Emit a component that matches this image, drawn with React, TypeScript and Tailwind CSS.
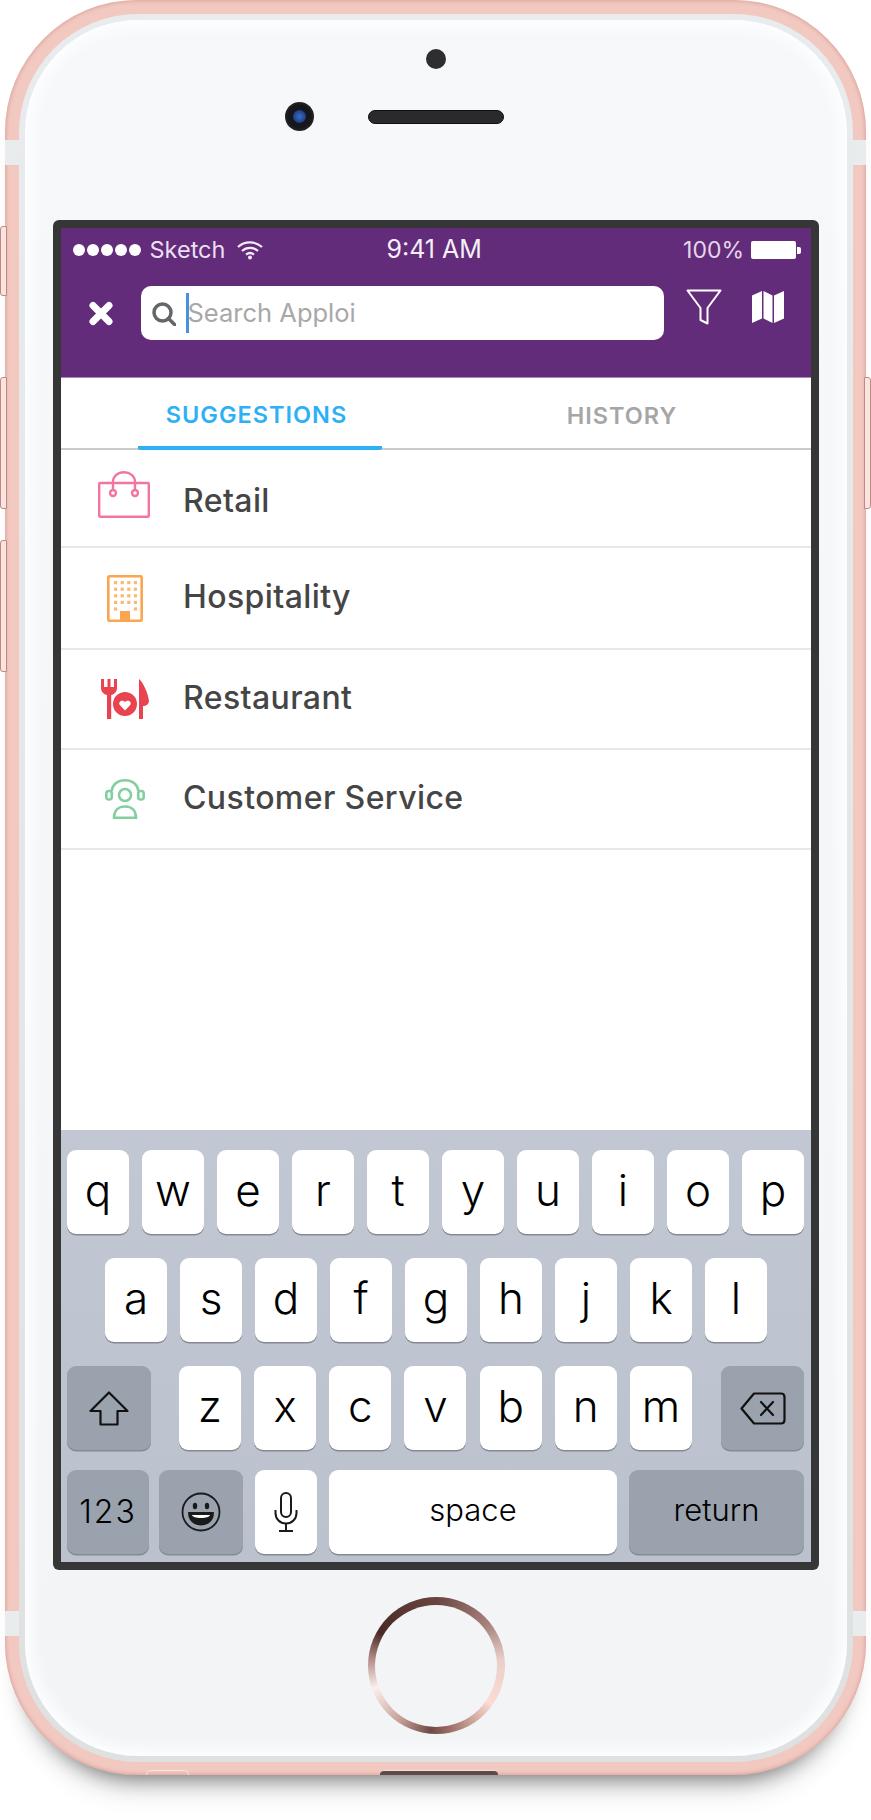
import { ReactNode } from 'react';

const rows = [
  { name: 'Retail', height: 'h-[98px]', text: 'pt-[5px]', icon: <BagIcon /> },
  { name: 'Hospitality', height: 'h-[102px]', text: 'pb-[3px]', icon: <BuildingIcon /> },
  { name: 'Restaurant', height: 'h-[100px]', text: 'pb-[3px]', icon: <RestaurantIcon /> },
  { name: 'Customer Service', height: 'h-[100px]', text: 'pb-[3px]', icon: <AgentIcon /> },
];

function BagIcon() {
  return (
    <svg className="-mt-[8px] -ml-[3px]" width="52" height="47" viewBox="0 0 52 47" fill="none" stroke="#f3759f" strokeWidth="2.4">
      <rect x="1.2" y="12" width="49.6" height="33.8" rx="1" />
      <path d="M15 19V11C15 5 20 1.2 26 1.2S37 5 37 11V19" />
      <circle cx="15" cy="22" r="3" fill="#fff" />
      <circle cx="37" cy="22" r="3" fill="#fff" />
    </svg>
  );
}

function BuildingIcon() {
  const dots = [];
  for (let r = 0; r < 5; r++) {
    for (let c = 0; c < 4; c++) {
      if (r === 4 && (c === 1 || c === 2)) continue;
      dots.push(<rect key={`${r}-${c}`} x={7 + c * 6.6} y={6 + r * 6.6} width="3.2" height="3.2" fill="#fbb973" />);
    }
  }
  return (
    <svg width="36" height="47" viewBox="0 0 36 47" fill="none">
      <rect x="1.3" y="1.3" width="33.4" height="44.4" rx="1" stroke="#fba64e" strokeWidth="2.6" />
      {dots}
      <rect x="13" y="36" width="10" height="10" fill="#fba64e" />
    </svg>
  );
}

function RestaurantIcon() {
  return (
    <svg width="48" height="40" viewBox="0 0 48 40" fill="#e8434f">
      <path d="M0 0H3V8H6.5V0H9.5V8H13V0H16V9C16 13 13 15.5 10.2 16V40H6V16C3 15.5 0 13 0 9Z" />
      <circle cx="24" cy="25" r="12" />
      <path d="M24 31.5L18.8 26C16.6 22.8 21.6 19.8 24 23.2C26.4 19.8 31.4 22.8 29.2 26Z" fill="#fff" />
      <path d="M38 0C42 3 47 14 48 22C48 25 45 27 42 27V40H38Z" />
    </svg>
  );
}

function AgentIcon() {
  return (
    <svg width="40" height="40" viewBox="0 0 40 40" fill="none" stroke="#83cfa0" strokeWidth="2.6">
      <circle cx="20" cy="16" r="6" />
      <path d="M6.5 12C8 5 13 1.3 20 1.3S32 5 33.5 12" />
      <rect x="1.3" y="12" width="5.5" height="8.5" rx="2.5" />
      <rect x="33.2" y="12" width="5.5" height="8.5" rx="2.5" />
      <path d="M9 38.7C9 31 14 27.5 20 27.5S31 31 31 38.7Z" />
    </svg>
  );
}

function Key({ children, className }: { children?: ReactNode; className: string }) {
  return (
    <div className={`h-[84px] flex items-center justify-center rounded-[9px] shadow-[0_1.5px_0_#858a92] text-black ${className}`}>
      {children}
    </div>
  );
}

function Letter({ ch }: { ch: string }) {
  return <Key className="w-[62px] bg-white text-[44px] font-[350] pb-[4px]">{ch}</Key>;
}

export default function App() {
  return (
    <div className="relative w-[871px] h-[1820px] overflow-hidden bg-white font-['Inter',sans-serif]">
      {/* Phone body */}
      <div className="relative ml-[5px] w-[861px] h-[1775px] rounded-[132px] bg-[#f2c9c1] pl-[14px] pr-[13px] pt-[14px] pb-[13px] shadow-[0_24px_22px_-22px_rgba(0,0,0,0.55),0_32px_30px_-18px_rgba(0,0,0,0.12),inset_0_0_5px_#cf958b]">
        {/* side buttons */}
        <div className="absolute -left-[5px] top-[226px] w-[7px] h-[70px] rounded-l-[3px] border border-[#c08a83] bg-[#f9e4df]" />
        <div className="absolute -left-[5px] top-[377px] w-[7px] h-[132px] rounded-l-[3px] border border-[#c08a83] bg-[#f9e4df]" />
        <div className="absolute -left-[5px] top-[540px] w-[7px] h-[132px] rounded-l-[3px] border border-[#c08a83] bg-[#f9e4df]" />
        <div className="absolute -right-[5px] top-[377px] w-[7px] h-[132px] rounded-r-[3px] border border-[#c08a83] bg-[#f9e4df]" />
        {/* antenna bands */}
        <div className="absolute left-0 top-[140px] w-[14px] h-[25px] bg-[#e9ecec]" />
        <div className="absolute right-0 top-[140px] w-[13px] h-[25px] bg-[#e9ecec]" />
        <div className="absolute left-0 top-[1611px] w-[14px] h-[25px] bg-[#e9ecec]" />
        <div className="absolute right-0 top-[1611px] w-[13px] h-[25px] bg-[#e9ecec]" />
        {/* jack and port */}
        <div className="absolute left-[141px] bottom-0 w-[43px] h-[5px] rounded-t-full border border-b-0 border-[#fbe3de]" />
        <div className="absolute left-[375px] bottom-0 w-[118px] h-[5px] rounded-t-[4px] border-t border-[#f8dcd6] bg-[#5f4a4a]" />

        <div className="h-full rounded-[119px] bg-gradient-to-b from-[#e9ecee] to-[#dfe1e1] p-[6px]">
          <div className="flex flex-col items-center h-full rounded-[113px] bg-gradient-to-b from-[#f7f8fa] to-[#f2f4f6] shadow-[inset_0_0_14px_7px_#fdfeff]">
            {/* Top sensors */}
            <div className="flex flex-col items-center h-[200px] pt-[29px] shrink-0">
              <div className="w-[20px] h-[20px] rounded-full bg-[#2e2e30]" />
              <div className="relative mt-[41px] w-[136px] h-[14px] rounded-full bg-[#2a2a2c] border border-[#111]">
                <div className="absolute -left-[84px] -top-[9px] flex items-center justify-center w-[29px] h-[29px] rounded-full bg-[radial-gradient(circle_at_50%_50%,#16161c_55%,#3f4045_100%)]">
                  <div className="w-[13px] h-[13px] rounded-full bg-[radial-gradient(circle,#3a6fc4,#12296b)]" />
                </div>
              </div>
            </div>

            {/* Screen */}
            <div className="rounded-[6px] bg-[#363636] p-[8px] shrink-0">
              <div className="flex flex-col w-[750px] h-[1334px] bg-white">
                {/* Purple header */}
                <div className="h-[150px] bg-[#622c7a] border-b border-[#a888b8] shrink-0 text-white">
                  <div className="flex items-center h-[44px] pl-[12px] pr-[10px] text-[23.5px]">
                    <div className="flex gap-[2.5px]">
                      {[0, 1, 2, 3, 4].map((i) => (
                        <div key={i} className="w-[11.5px] h-[11.5px] rounded-full bg-white" />
                      ))}
                    </div>
                    <span className="ml-[9px] w-[87px] text-[#ecdff0]">Sketch</span>
                    <svg width="26" height="20" viewBox="0 0 26 20" fill="none" stroke="#f3ecf5" strokeWidth="2.2">
                      <path d="M1 7C7.5 .8 18.5 .8 25 7" />
                      <path d="M5 11C9.5 6.8 16.5 6.8 21 11" />
                      <path d="M9 14.6C11.5 12.6 14.5 12.6 17 14.6" />
                      <circle cx="13" cy="17.6" r="2" fill="#f3ecf5" stroke="none" />
                    </svg>
                    <span className="ml-[124px] text-[25px] text-[#f5eff7]">9:41 AM</span>
                    <span className="ml-auto text-[23px] text-[#e4d7ea]">100%</span>
                    <div className="ml-[7px] w-[45px] h-[18px] rounded-[2px] bg-white" />
                    <div className="ml-[1px] w-[4px] h-[7px] rounded-r-[2px] bg-white" />
                  </div>
                  <div className="flex items-center mt-[14px]">
                    <svg className="ml-[28px]" width="24" height="25" viewBox="0 0 24 25" fill="none" stroke="#fff" strokeWidth="7" strokeLinecap="round">
                      <path d="M4 4.5L20 20.5M20 4.5L4 20.5" />
                    </svg>
                    <div className="flex items-center ml-[28px] w-[523px] h-[54px] rounded-[10px] bg-white">
                      <svg className="ml-[11px] mt-[1px]" width="24" height="24" viewBox="0 0 24 24" fill="none" stroke="#63676a" strokeWidth="3.5">
                        <circle cx="10.5" cy="10.5" r="8.5" />
                        <path d="M16.5 16.5L23 23" strokeLinecap="round" />
                      </svg>
                      <div className="ml-[10px] w-[2.5px] h-[40px] bg-[#4a90e2]" />
                      <span className="-ml-[1px] text-[25.5px] text-[#a8a8a8]">Search Apploi</span>
                    </div>
                    <svg className="ml-[22px] -mt-[12px]" width="36" height="36" viewBox="0 0 36 36" fill="none" stroke="#fff" strokeWidth="2" strokeLinejoin="round">
                      <path d="M1.5 1.5H34.5L21.5 19V34.5L14.5 31V19Z" />
                    </svg>
                    <svg className="ml-[30px] -mt-[12px]" width="32" height="32" viewBox="0 0 32 32" fill="#fff">
                      <path d="M0 4.5L10 0V27.5L0 32Z" />
                      <path d="M11.5 0L20.5 4.5V32L11.5 27.5Z" />
                      <path d="M22 4.5L32 0V27.5L22 32Z" />
                    </svg>
                  </div>
                </div>

                {/* Tabs */}
                <div className="flex h-[72px] pl-[77px] border-b-2 border-[#c9cbcd] shrink-0 text-[23.5px] font-semibold tracking-[1px]">
                  <div className="flex items-center justify-center w-[244px] h-[72px] pt-[6px] pr-[7px] rounded-[2px] border-b-4 border-[#2db0f6] text-[#2db0f6]">
                    SUGGESTIONS
                  </div>
                  <div className="flex items-center justify-center ml-[118px] w-[244px] h-[70px] pt-[6px] text-[#a6a6a6]">
                    HISTORY
                  </div>
                </div>

                {/* Suggestion rows */}
                {rows.map((row) => (
                  <div key={row.name} className={`flex items-center shrink-0 border-b-2 border-[#e6e7e8] ${row.height}`}>
                    <div className="flex justify-center w-[122px] pl-[6px]">{row.icon}</div>
                    <span className={`text-[32px] font-medium tracking-[0.4px] text-[#454545] ${row.text}`}>{row.name}</span>
                  </div>
                ))}

                <div className="flex-1" />

                {/* Keyboard */}
                <div className="flex flex-col h-[432px] pt-[20px] pl-[6px] bg-gradient-to-b from-[#c2c8d3] to-[#bbc2cd] shrink-0">
                  <div className="flex gap-[13px]">
                    {'qwertyuiop'.split('').map((ch) => (
                      <Letter key={ch} ch={ch} />
                    ))}
                  </div>
                  <div className="flex gap-[13px] mt-[24px] ml-[38px]">
                    {'asdfghjkl'.split('').map((ch) => (
                      <Letter key={ch} ch={ch} />
                    ))}
                  </div>
                  <div className="flex mt-[24px]">
                    <Key className="w-[84px] bg-[#9aa2ae]">
                      <svg width="40" height="35" viewBox="0 0 40 35" fill="none" stroke="#111" strokeWidth="2.2" strokeLinejoin="round">
                        <path d="M20 1.5L38.5 20H28.5V33.5H11.5V20H1.5Z" />
                      </svg>
                    </Key>
                    <div className="flex gap-[13.17px] ml-[28px]">
                      {'zxcvbnm'.split('').map((ch) => (
                        <Letter key={ch} ch={ch} />
                      ))}
                    </div>
                    <Key className="w-[83px] ml-auto mr-[7px] bg-[#9aa2ae]">
                      <svg width="46" height="33" viewBox="0 0 46 33" fill="none" stroke="#111" strokeWidth="2.2" strokeLinejoin="round">
                        <path d="M14 1.5H41C43 1.5 44.5 3 44.5 5V28C44.5 30 43 31.5 41 31.5H14L1.5 16.5Z" />
                        <path d="M21 10L33 23M33 10L21 23" strokeLinecap="round" />
                      </svg>
                    </Key>
                  </div>
                  <div className="flex mt-[20px] text-[31px]">
                    <Key className="w-[82px] bg-[#9aa2ae] text-[32px] font-light tracking-[2px]">123</Key>
                    <Key className="w-[84px] ml-[10px] bg-[#9aa2ae]">
                      <svg width="40" height="40" viewBox="0 0 40 40" fill="none" stroke="#1a1a1a" strokeWidth="1.8">
                        <circle cx="20" cy="20" r="18.5" />
                        <ellipse cx="14" cy="14" rx="2.2" ry="3.2" fill="#1a1a1a" stroke="none" />
                        <ellipse cx="26" cy="14" rx="2.2" ry="3.2" fill="#1a1a1a" stroke="none" />
                        <path d="M8 21H32C32 28 27 32.5 20 32.5S8 28 8 21Z" fill="#1a1a1a" />
                        <path d="M11 23H29C28.5 25 25 26 20 26S11.5 25 11 23Z" fill="#fff" stroke="none" />
                      </svg>
                    </Key>
                    <Key className="w-[62px] ml-[12px] bg-white">
                      <svg width="24" height="40" viewBox="0 0 24 40" fill="none" stroke="#1a1a1a" strokeWidth="2">
                        <rect x="7" y="1" width="10" height="24" rx="5" />
                        <path d="M1.5 18V21C1.5 27 6 31.5 12 31.5S22.5 27 22.5 21V18" />
                        <path d="M12 31.5V39M5 39H19" />
                      </svg>
                    </Key>
                    <Key className="w-[288px] ml-[12px] pb-[3px] bg-white font-light">space</Key>
                    <Key className="w-[175px] ml-[12px] pb-[3px] bg-[#9aa2ae] font-light">return</Key>
                  </div>
                </div>
              </div>
            </div>

            {/* Home button */}
            <div className="pt-[27px]">
              <div className="flex items-center justify-center w-[137px] h-[137px] rounded-full bg-[conic-gradient(from_0deg,#6a4540_0deg,#a67f79_50deg,#e9cfc9_85deg,#fcdcd3_125deg,#9a6a63_170deg,#6f4a45_185deg,#c9a29b_215deg,#fbf0ec_250deg,#b68f89_275deg,#4a2a26_300deg,#6a4540_360deg)]">
                <div className="w-[122px] h-[122px] rounded-full bg-[#f2f4f6]" />
              </div>
            </div>
          </div>
        </div>
      </div>
    </div>
  );
}
